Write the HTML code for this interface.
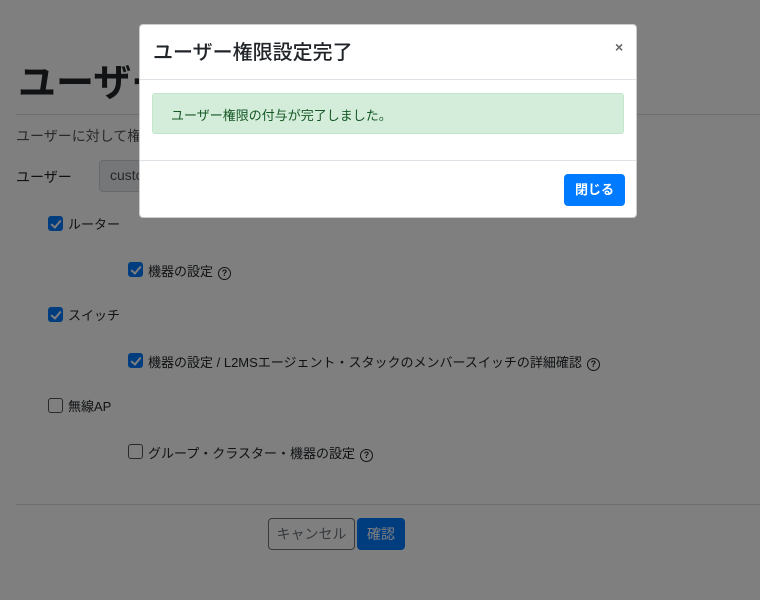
<!DOCTYPE html>
<html><head><meta charset="utf-8"><style>
*{box-sizing:border-box}
body{margin:0;width:760px;height:600px;overflow:hidden;background:#fff;font-family:"Liberation Sans","Noto Sans CJK JP",sans-serif;color:#212529;font-size:13px;position:relative}
.a{position:absolute;white-space:nowrap}
.cb{position:absolute;width:15px;height:15px;border-radius:3px}
.on{background:#007bff;border:1px solid #007bff}
.on:after{content:"";position:absolute;left:4px;top:1px;width:4px;height:8px;border:solid #fff;border-width:0 2px 2px 0;transform:rotate(40deg)}
.off{background:#fff;border:1px solid #555}
.q{display:inline-block;width:13px;height:13px;border:1.5px solid #212529;border-radius:50%;font-size:9px;font-weight:bold;text-align:center;line-height:10px;margin-left:5px;vertical-align:0}
.ov{position:absolute;inset:0;background:rgba(0,0,0,.5)}
.m{position:absolute;left:139px;top:24px;width:498px;height:194px;background:#fff;border-radius:4px;border:1px solid rgba(0,0,0,.2)}
</style></head><body>
<div class="a" style="left:18px;top:52px;font-size:38px;font-weight:bold">ユーザー権限設定</div>
<div class="a" style="left:16px;top:114px;width:744px;border-top:1px solid #ddd"></div>
<div class="a" style="left:16px;top:126px;font-size:14px;color:#555">ユーザーに対して権限を設定してください。</div>
<div class="a" style="left:16px;top:167px;font-size:14px">ユーザー</div>
<div class="a" style="left:99px;top:160px;width:300px;height:32px;background:#e9ecef;border:1px solid #ced4da;border-radius:4px;padding:6px 10px;font-size:14px;color:#495057">customer</div>
<div class="cb on" style="left:48px;top:216px"></div><div class="a" style="left:68px;top:214px">ルーター</div>
<div class="cb on" style="left:128px;top:262px"></div><div class="a" style="left:148px;top:261px">機器の設定<span class="q">?</span></div>
<div class="cb on" style="left:48px;top:307px"></div><div class="a" style="left:68px;top:305px">スイッチ</div>
<div class="cb on" style="left:128px;top:353px"></div><div class="a" style="left:148px;top:352px">機器の設定 / L2MSエージェント・スタックのメンバースイッチの詳細確認<span class="q">?</span></div>
<div class="cb off" style="left:48px;top:398px"></div><div class="a" style="left:68px;top:396px">無線AP</div>
<div class="cb off" style="left:128px;top:444px"></div><div class="a" style="left:148px;top:443px">グループ・クラスター・機器の設定<span class="q">?</span></div>
<div class="a" style="left:16px;top:504px;width:744px;border-top:1px solid #ddd"></div>
<div class="a" style="left:268px;top:518px;width:87px;height:32px;border:1px solid #6c757d;border-radius:4px;text-align:center;line-height:30px;color:#6c757d;font-size:14px">キャンセル</div>
<div class="a" style="left:357px;top:518px;width:48px;height:32px;background:#007bff;border-radius:4px;text-align:center;line-height:32px;color:#fff;font-size:14px">確認</div>
<div class="ov"></div>
<div class="m">
<div class="a" style="left:13px;top:11px;font-size:20px;font-weight:500">ユーザー権限設定完了</div>
<div class="a" style="left:475px;top:14px;font-size:14px;color:#666;font-weight:bold">×</div>
<div class="a" style="left:0;top:54px;width:496px;border-top:1px solid #dee2e6"></div>
<div class="a" style="left:12px;top:68px;width:472px;height:41px;background:#d4edda;border:1px solid #c3e6cb;border-radius:3px;color:#155724;padding:11px 18px">ユーザー権限の付与が完了しました。</div>
<div class="a" style="left:0;top:135px;width:496px;border-top:1px solid #dee2e6"></div>
<div class="a" style="left:424px;top:149px;width:61px;height:32px;background:#007bff;border-radius:4px;color:#fff;text-align:center;line-height:32px;font-weight:bold">閉じる</div>
</div>
</body></html>
